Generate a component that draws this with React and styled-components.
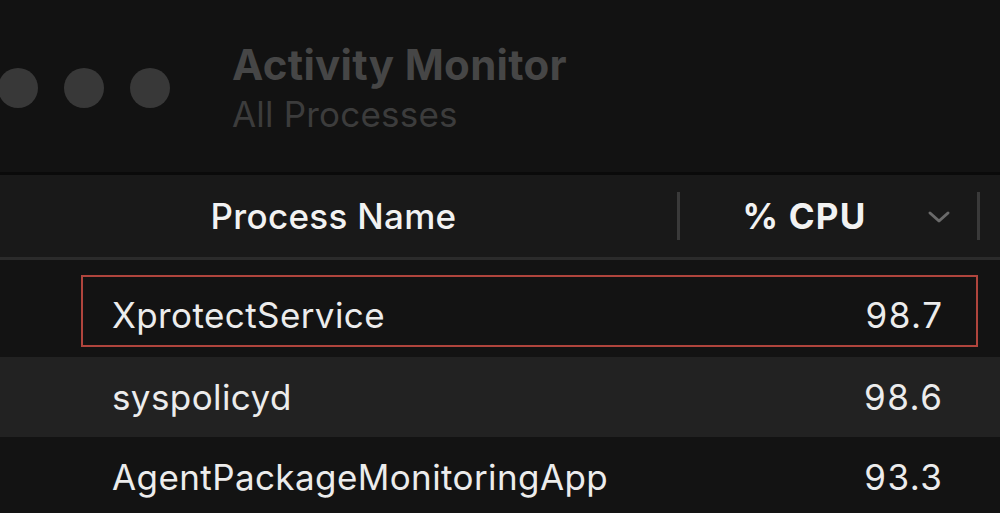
import React from "react";
import styled, { createGlobalStyle } from "styled-components";

const GlobalStyle = createGlobalStyle`
  html, body {
    margin: 0;
    padding: 0;
    background: #131313;
    overflow: hidden;
  }
  body {
    font-family: Inter, "Liberation Sans", sans-serif;
  }
`;

const processes = [
  { name: "XprotectService", cpu: "98.7", selected: true },
  { name: "syspolicyd", cpu: "98.6" },
  { name: "AgentPackageMonitoringApp", cpu: "93.3" },
];

const Window = styled.div`
  width: 1000px;
  height: 513px;
  display: flex;
  flex-direction: column;
  background: #131313;
  overflow: hidden;
`;

const TitleBar = styled.div`
  height: 172px;
  flex-shrink: 0;
  display: flex;
  align-items: center;
  background: #121212;
  border-bottom: 3px solid #0a0a0a;
`;

const Lights = styled.div`
  display: flex;
  gap: 26px;
  margin-left: -2px;
  margin-top: 4px;
`;

const Light = styled.span`
  width: 40px;
  height: 40px;
  border-radius: 50%;
  background: #383838;
`;

const TitleText = styled.div`
  margin-left: 62px;
  display: flex;
  flex-direction: column;
  gap: 6px;
  margin-top: 4px;
`;

const Title = styled.div`
  font-size: 42px;
  font-weight: 700;
  color: #464646;
  line-height: 46px;
  letter-spacing: 0.3px;
`;

const Subtitle = styled.div`
  font-size: 35px;
  font-weight: 400;
  color: #3c3c3c;
  line-height: 40px;
  letter-spacing: 0.2px;
`;

const Header = styled.div`
  height: 82px;
  flex-shrink: 0;
  display: flex;
  align-items: center;
  background: #191919;
  border-bottom: 3px solid #2b2b2b;
`;

const HeaderCell = styled.div`
  width: ${(p) => p.width}px;
  height: 48px;
  display: flex;
  align-items: center;
  justify-content: center;
  position: relative;
  font-size: 35px;
  font-weight: ${(p) => (p.bold ? 700 : 500)};
  letter-spacing: ${(p) => (p.bold ? 1.2 : 0.3)}px;
  color: #f2f2f2;
  border-right: 3px solid #3a3a3a;
  box-sizing: border-box;
  padding-right: ${(p) => p.padRight || 0}px;
`;

const Chevron = styled.svg`
  position: absolute;
  right: 26px;
  top: 18px;
`;

const Row = styled.div`
  height: ${(p) => p.height}px;
  flex-shrink: 0;
  display: flex;
  align-items: ${(p) => (p.selected ? "flex-start" : "center")};
  background: ${(p) => (p.striped ? "#222222" : "#131313")};
  padding: ${(p) => (p.selected ? "15px 22px 0 81px" : "0 58px 0 112px")};
  box-sizing: border-box;
`;

const RowInner = styled.div`
  flex: 1;
  display: flex;
  align-items: center;
  justify-content: space-between;
  height: ${(p) => (p.selected ? "72px" : "auto")};
  border: ${(p) => (p.selected ? "2px solid #b0453d" : "none")};
  padding: ${(p) => (p.selected ? "8px 34px 0 29px" : "0")};
  box-sizing: border-box;
`;

const Name = styled.span`
  font-size: 35px;
  color: #ececec;
  letter-spacing: 0.4px;
`;

const Cpu = styled.span`
  font-size: 35px;
  color: #ececec;
  letter-spacing: 1.5px;
  margin-right: -1.5px;
`;

export default function App() {
  return (
    <>
      <GlobalStyle />
      <Window>
        <TitleBar>
          <Lights>
            <Light />
            <Light />
            <Light />
          </Lights>
          <TitleText>
            <Title>Activity Monitor</Title>
            <Subtitle>All Processes</Subtitle>
          </TitleText>
        </TitleBar>
        <Header>
          <HeaderCell width={680} padRight={10}>Process Name</HeaderCell>
          <HeaderCell width={300} bold padRight={48}>
            % CPU
            <Chevron width="24" height="14" viewBox="0 0 24 14">
              <path d="M3 3 L12 11 L21 3" fill="none" stroke="#6a6a6a" strokeWidth="3" strokeLinecap="round" strokeLinejoin="round" />
            </Chevron>
          </HeaderCell>
        </Header>
        {processes.map((p, i) => (
          <Row key={p.name} height={i === 0 ? 97 : 80} selected={p.selected} striped={i % 2 === 1}>
            <RowInner selected={p.selected}>
              <Name>{p.name}</Name>
              <Cpu>{p.cpu}</Cpu>
            </RowInner>
          </Row>
        ))}
      </Window>
    </>
  );
}
